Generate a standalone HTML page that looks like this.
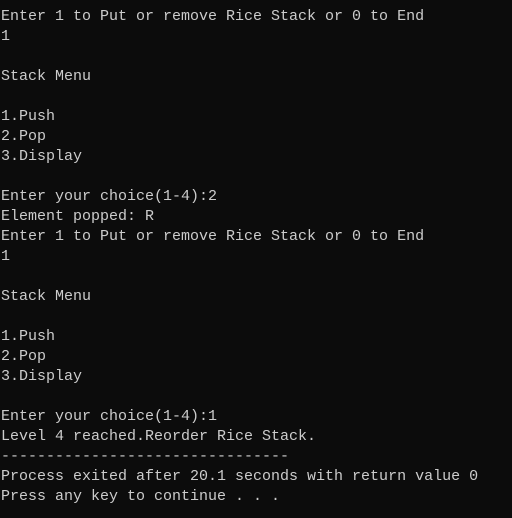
<!DOCTYPE html>
<html><head><style>
html,body{margin:0;padding:0;background:#0c0c0c;width:512px;height:518px;overflow:hidden}
pre{margin:0;position:absolute;left:1px;top:7px;font-family:"Liberation Mono",monospace;font-size:15px;line-height:20px;color:#cccccc}
</style></head><body><pre>Enter 1 to Put or remove Rice Stack or 0 to End
1

Stack Menu

1.Push
2.Pop
3.Display

Enter your choice(1-4):2
Element popped: R
Enter 1 to Put or remove Rice Stack or 0 to End
1

Stack Menu

1.Push
2.Pop
3.Display

Enter your choice(1-4):1
Level 4 reached.Reorder Rice Stack.
--------------------------------
Process exited after 20.1 seconds with return value 0
Press any key to continue . . .</pre></body></html>
